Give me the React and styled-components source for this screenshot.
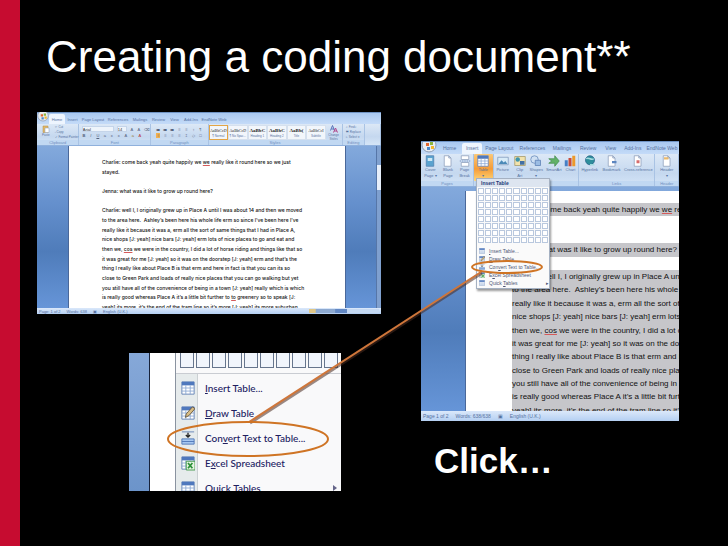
import React from "react";
import styled, { createGlobalStyle } from "styled-components";

const GlobalStyle = createGlobalStyle`
  * { box-sizing: border-box; }
  body { margin: 0; background: #000; font-family: "Liberation Sans", Arial, sans-serif; }
  button, select { font: inherit; color: inherit; border: 0; padding: 0; margin: 0; background: none; appearance: none; }
`;

const Slide = styled.main`
  min-height: 100vh;
  padding: 31px 49px 0 17px;
  border-left: 20px solid #c60c30;
  background: #000;
  color: #fff;
`;
const Title = styled.h1`
  margin: 0 0 29px 9px;
  font-size: 44px;
  line-height: 52px;
  font-weight: 400;
  white-space: nowrap;
`;
const Figures = styled.div`
  position: relative;
  display: grid;
  grid-template-columns: 344fr 258fr;
  column-gap: 40px;
`;
const Column = styled.div`
  min-width: 0;
  padding-top: ${(p) => p.$top || 0}px;
`;
const Caption = styled.p`
  margin: 20px 0 0 13px;
  font-size: 35px;
  line-height: 40px;
  font-weight: 700;
`;
const Annotation = styled.svg`
  position: absolute;
  inset: 0;
  width: 100%;
  height: 379px;
  pointer-events: none;
`;

/* Word window */
const Window = styled.section`
  overflow: hidden;
  background: #bcd3f0;
  color: #55719f;
  font-size: 4px;
  line-height: 5px;
  white-space: nowrap;
`;
const Tabs = styled.nav`
  display: flex;
  align-items: flex-end;
  height: ${(p) => p.$h}px;
  background: linear-gradient(#a9c8f0, #c4dbf8);
  border-top: 1px solid #6f93c4;
  font-size: ${(p) => p.$font}px;
`;
const Orb = styled.svg`
  flex: none;
  width: ${(p) => p.$w}px;
  height: 12px;
`;
const Tab = styled.button`
  flex: ${(p) => p.$w} 0 0;
  min-width: 0;
  height: 88%;
  text-align: center;
  border-radius: 2px 2px 0 0;
  background: ${(p) => (p.$on ? "#eef5fe" : "transparent")};
`;
const TabSpace = styled.span`
  flex: 153 0 0;
`;
const Ribbon = styled.div`
  display: flex;
  height: ${(p) => p.$h}px;
  background: linear-gradient(#dce8f6, #c5d8ef 60%, #d5e5f7);
  border-bottom: 1px solid #8fb0dc;
`;
const Group = styled.div`
  display: flex;
  flex-direction: column;
  flex: ${(p) => p.$w} 0 0;
  min-width: 0;
  border-right: 1px solid #a9c3e4;
`;
const GroupTools = styled.div`
  display: flex;
  flex: 1;
  min-height: 0;
  align-items: center;
  justify-content: space-around;
`;
const GroupLabel = styled.div`
  min-height: 5px;
  text-align: center;
  background: #c1d8f2;
  color: #6f8fc0;
`;
const Stack = styled.div`
  display: flex;
  flex-direction: column;
  gap: ${(p) => p.$gap || 0}px;
  align-items: flex-start;
`;
const ToolRow = styled.div`
  display: flex;
  gap: 3px;
  align-items: center;
`;
const Tool = styled.button`
  width: 4px;
  height: 5px;
  line-height: 5px;
  color: ${(p) => p.$c || "#56647e"};
  background: ${(p) => p.$bg || "transparent"};
`;
const TextTool = styled.button`
  display: block;
  height: 5px;
  line-height: 5px;
  font-size: 3px;
`;
const FontSelect = styled.select`
  width: ${(p) => p.$w}px;
  height: 6px;
  line-height: 5px;
  background: #eef4fb;
  border: 1px solid #c5d5ea;
  color: #333;
`;
const Gallery = styled.div`
  display: flex;
  flex: 118 0 0;
  height: 15px;
  background: #f2f6fb;
`;
const StyleCard = styled.button`
  flex: 1 1 0;
  min-width: 0;
  overflow: hidden;
  border: 1px solid ${(p) => (p.$on ? "#e3a545" : "#d5e0ee")};
  font-size: 3px;
  line-height: 4px;
  text-align: center;
  b {
    display: block;
    color: #222;
    font: ${(p) => (p.$big ? "700 5px/7px" : "400 4px/7px")} "Liberation Serif", serif;
  }
`;
const BigTool = styled.button`
  flex: ${(p) => p.$w} 0 0;
  min-width: 0;
  height: 100%;
  display: flex;
  flex-direction: column;
  align-items: center;
  padding-top: 1px;
  border-radius: 1px;
  line-height: ${(p) => (p.$small ? 4 : 6)}px;
  font-size: ${(p) => (p.$small ? 3 : 4)}px;
  background: ${(p) => (p.$on ? "linear-gradient(#fbc877, #f59c38 55%, #fdd67a)" : "transparent")};
  svg {
    flex: none;
    width: ${(p) => (p.$small ? 8 : 12)}px;
    height: ${(p) => (p.$small ? 8 : 12)}px;
  }
`;

const Workspace = styled.div`
  display: flex;
  height: ${(p) => p.$h}px;
  overflow: hidden;
  padding-left: ${(p) => p.$left}px;
  padding-top: ${(p) => p.$top}px;
  background: linear-gradient(#83a9dc, #6590cd 35%, #4f7cba 65%, #6695d8);
`;
const Paper = styled.article`
  flex: 1;
  min-width: 0;
  overflow: hidden;
  padding: ${(p) => p.$pad};
  background: #fff;
  border-left: 1px solid #4a689a;
  border-right: ${(p) => (p.$edge ? "1px solid #4a689a" : "0")};
`;
const Lines = styled.div`
  display: grid;
  grid-template-rows: repeat(16, 1fr);
  align-items: stretch;
  height: ${(p) => p.$h}px;
  font: ${(p) => p.$font};
  color: #111;
`;
const Line = styled.div`
  display: flex;
  align-items: center;
  white-space: pre;
  background: ${(p) => (p.$sel ? "#c6c6ca" : "transparent")};
  u { text-decoration: underline; text-decoration-color: #d45a5a; }
`;
const Scroll = styled.div`
  width: 5px;
  margin-left: 30px;
  padding-top: 19px;
  background: #7fa0cf;
  border-left: 1px solid #5676a8;
`;
const Thumb = styled.div`
  height: 25px;
  background: #e6eefa;
`;
const Status = styled.footer`
  display: flex;
  align-items: center;
  gap: ${(p) => p.$gap}px;
  height: ${(p) => p.$h}px;
  padding: 0 2px;
  background: linear-gradient(#dbe8fa, #b4cff2);
  font-size: ${(p) => p.$font}px;
`;
const ZoomBar = styled.span`
  width: 70px;
  height: 4px;
  margin-left: auto;
  background: linear-gradient(90deg, #e0c787 9%, #8da9d0 10% 37%, #6288c4 38% 54%, #c5d9f3 55%);
`;

/* Insert-table menu inside the second window */
const WindowWrap = styled.div`
  position: relative;
`;
const Menu = styled.div`
  position: absolute;
  left: 55px;
  top: 37px;
  width: 74px;
  padding-bottom: 1px;
  background: #fafafa;
  border: 1px solid #a5b1c2;
  box-shadow: 1px 2px 2px rgba(0, 0, 0, 0.4);
  font-size: 5px;
  line-height: 8px;
  color: #4d5674;
`;
const MenuHead = styled.div`
  padding-left: 4px;
  background: #dde5f0;
  color: #243b78;
  font-weight: 700;
`;
const Cells = styled.div`
  display: grid;
  grid-template-columns: repeat(10, 1fr);
  grid-auto-rows: 6px;
  gap: 1px;
  padding: 1px 1px 4px;
`;
const Cell = styled.i`
  border: 1px solid #b9c8de;
  background: #fff;
`;
const MenuItem = styled.button`
  display: flex;
  align-items: center;
  width: 100%;
  height: 8px;
  white-space: nowrap;
  svg { width: 6px; height: 6px; margin: 0 4px 0 2px; }
  span { flex: 1; text-align: left; }
`;

/* Enlarged menu detail */
const Detail = styled.section`
  display: flex;
  height: 138px;
  width: 212px;
  margin: 39px 0 0 92px;
  overflow: hidden;
  background: #fff;
`;
const DetailSide = styled.div`
  width: 21px;
  background: linear-gradient(#86a8d8, #6c94ca);
  border-right: 1px solid #17223a;
`;
const DetailMenu = styled.div`
  flex: 1;
  min-width: 0;
  margin-left: 25px;
  border-left: 1px solid #8a93a0;
  background: #f9f9fa;
`;
const DetailCells = styled.div`
  display: flex;
  gap: 2px;
  height: 21px;
  padding: 0 0 5px 4px;
  overflow: hidden;
  border-bottom: 1px solid #c9ccd2;
`;
const DetailCell = styled.i`
  flex: none;
  width: 14px;
  border: 1px solid #66758d;
  border-top: 0;
  background: #f1f5fc;
`;
const DetailItems = styled.div`
  padding-top: 1px;
  background: linear-gradient(90deg, #e6ebec 21px, #cbd0d3 21px 22px, transparent 22px);
`;
const DetailItem = styled.button`
  display: flex;
  align-items: center;
  width: 100%;
  height: 25px;
  padding-left: 5px;
  color: #20205f;
  font-family: Lato, "Noto Sans", sans-serif;
  font-size: 10px;
  font-weight: 500;
  white-space: nowrap;
  svg { flex: none; width: 14px; height: 16px; margin-right: 10px; }
  span { flex: 1; text-align: left; }
  u { text-underline-offset: 1px; }
`;
const More = styled.em`
  margin-right: 4px;
  border-left: 4px solid #66668a;
  border-top: 3px solid transparent;
  border-bottom: 3px solid transparent;
`;

const transcript = [
  ["Charlie: come back yeah quite happily we ", "we", " really like it round here so we just"],
  ["stayed."],
  [""],
  ["Jenna: what was it like to grow up round here?"],
  [""],
  ["Charlie: well I, I originally grew up in Place A until I was about 14 and then we moved"],
  ["to the area here.  Ashley’s been here his whole life erm so since I’ve been here I’ve"],
  ["really like it because it was a, erm all the sort of same things that I had in Place A,"],
  ["nice shops [J: yeah] nice bars [J: yeah] erm lots of nice places to go and eat and"],
  ["then we, ", "cos", " we were in the country, I did a lot of horse riding and things like that so"],
  ["it was great for me [J: yeah] so it was on the doorstep [J: yeah] erm and that’s the"],
  ["thing I really like about Place B is that erm and here in fact is that you can its so"],
  ["close to Green Park and loads of really nice places that you can go walking but yet"],
  ["you still have all of the convenience of being in a town [J: yeah] really which is which"],
  ["is really good whereas Place A it’s a little bit further to ", "to", " greenery so to speak [J:"],
  ["yeah] its more, it’s the end of the tram line so it’s more [J: yeah] its more suburban"],
];

function Transcript({ selected, height, font }) {
  return (
    <Lines $h={height} $font={font}>
      {transcript.map(([before, marked, after], i) => (
        <Line key={i} $sel={selected && (i === 0 || i === 3 || i > 4)}>
          <span>{before}{marked && <u>{marked}</u>}{after}</span>
        </Line>
      ))}
    </Lines>
  );
}

function OfficeOrb({ width }) {
  return (
    <Orb $w={width} viewBox="0 0 16 12" aria-hidden="true">
      <circle cx="8" cy="3" r="7" fill="#e9edf3" stroke="#8b9bb2" />
      <path d="M5 1h3v3H5z" fill="#e0662e" />
      <path d="M9 0h3v3H9z" fill="#8cb63c" />
      <path d="M6 5h3v3H6z" fill="#4b87c9" />
      <path d="M10 4h3v3h-3z" fill="#f2b72f" />
    </Orb>
  );
}

const PageShape = <path d="M3 1h6l3 3v11H3z M9 1v3h3" fill="#fff" stroke="#8b9cb8" />;
const TableShape = (
  <>
    <path d="M1 1h14v14H1z" fill="#fff" stroke="#5d7db4" />
    <path d="M1 1h14v4H1z" fill="#4f78bd" />
    <path d="M1 8h14M1 11.500h14M5.500 5v10M10.500 5v10" stroke="#8ba8d4" />
  </>
);
const drawings = {
  cover: <><path d="M3 1h10v14H3z" fill="#5aa3cf" stroke="#527fae" /><path d="M5 4h6v4H5z" fill="#cfe8f4" /></>,
  blank: PageShape,
  pageBreak: <><path d="M3 1h10v5H3zM3 10h10v5H3z" fill="#fff" stroke="#8b9cb8" /><path d="M1 8h14" stroke="#5d7db4" strokeDasharray="2 1" /></>,
  table: TableShape,
  picture: <><path d="M1 3h14v10H1z" fill="#d8ebf8" stroke="#7c96b8" /><path d="M2 12l4-5 3 3 2-2 3 4z" fill="#4c8ab8" /></>,
  clip: <><path d="M1 2h14v12H1z" fill="#f1e2ac" stroke="#a39765" /><circle cx="5" cy="6" r="3" fill="#3f95ab" /><path d="M8 8h6v5H8z" fill="#416fa4" /></>,
  shapes: <><circle cx="6" cy="6" r="5" fill="#cfe0f3" stroke="#6488ba" /><path d="M7 7h7v7H7z" fill="#9bbce3" stroke="#5a7eb3" /></>,
  smart: <path d="M1 5h8V1l6 7-6 7v-4H1l4-3z" fill="#61b168" stroke="#478d52" />,
  chart: <><path d="M1 7h4v8H1z" fill="#477fc5" /><path d="M6 4h4v11H6z" fill="#c84b3a" /><path d="M11 1h4v14h-4z" fill="#ec9a2c" /></>,
  link: <><circle cx="8" cy="7" r="6" fill="#2e8e9c" stroke="#28618a" /><path d="M3 5c4-3 6 3 10 0M8 13h6" stroke="#a5dce0" strokeWidth="2" fill="none" /></>,
  bookmark: <>{PageShape}<path d="M8 8h6v3H8z" fill="#5c86c0" /></>,
  cross: <>{PageShape}<path d="M6 7h4v4H6z" fill="#d66b6b" /></>,
  header: <>{PageShape}<path d="M4 3h6v3H4z" fill="#e9b96b" /></>,
  draw: <>{TableShape}<path d="M5 13l1-4 7-8 3 2-7 8z" fill="#d9bd85" stroke="#66563d" /></>,
  convert: <><path d="M1 1h14" stroke="#5d7db4" /><path d="M8 2v5M5.500 4.500L8 7l2.500-2.500" stroke="#222" strokeWidth="1.500" fill="none" /><path d="M1 9h14v6H1z" fill="#a7c8f1" stroke="#4c73b5" /><path d="M1 12h14" stroke="#4c73b5" /></>,
  excel: <>{TableShape}<path d="M6 6h10v10H6z" fill="#e6f4e2" stroke="#3a9544" /><path d="M8 8l5 6M13 8l-5 6" stroke="#2c9138" strokeWidth="2" /></>,
  paste: <><path d="M2 2h10v13H2z" fill="#e3b866" stroke="#b08c48" /><path d="M6 6h8v9H6z" fill="#fff" stroke="#8b9cb8" /></>,
  styles: <><path d="M1 11L5 1l4 10M3 8h5" stroke="#5872b8" strokeWidth="2" fill="none" /><path d="M7 15l4-9 4 9M8 12h6" stroke="#b04a8d" strokeWidth="2" fill="none" /></>,
};
const Icon = ({ name }) => <svg viewBox="0 0 16 16" aria-hidden="true">{drawings[name]}</svg>;

const menuItems = [
  { icon: "table", key: "I", rest: "nsert Table..." },
  { icon: "draw", key: "D", rest: "raw Table" },
  { icon: "convert", pre: "Con", key: "v", rest: "ert Text to Table..." },
  { icon: "excel", pre: "E", key: "x", rest: "cel Spreadsheet" },
  { icon: "table", pre: "Quick ", key: "T", rest: "ables", more: true },
];
const ItemText = ({ item }) => <span>{item.pre}<u>{item.key}</u>{item.rest}</span>;

const homeTabs = [["Home", 16], ["Insert", 15], ["Page Layout", 26], ["References", 24], ["Mailings", 20], ["Review", 17], ["View", 15], ["Add-Ins", 18], ["EndNote Web", 28]];
const insertTabs = [["Home", 25], ["Insert", 20], ["Page Layout", 34], ["References", 32], ["Mailings", 27], ["Review", 25], ["View", 20], ["Add-Ins", 24], ["EndNote Web", 34]];
const insertGroups = [
  ["Pages", 53, [["cover", "Cover", "Page ▾", 18], ["blank", "Blank", "Page", 16], ["pageBreak", "Page", "Break", 16]]],
  ["", 19, [["table", "Table", "▾", 18]]],
  ["", 86, [["picture", "Picture", "", 18], ["clip", "Clip", "Art", 16], ["shapes", "Shapes", "▾", 17], ["smart", "SmartArt", "", 18], ["chart", "Chart", "", 15]]],
  ["Links", 77, [["link", "Hyperlink", "", 21], ["bookmark", "Bookmark", "", 21], ["cross", "Cross-reference", "", 31]]],
  ["Header", 23, [["header", "Header", "▾", 22]]],
];
const styleCards = [["AaBbCcD", "¶ Normal"], ["AaBbCcD", "¶ No Spac..."], ["AaBbC", "Heading 1", true], ["AaBbC", "Heading 2", true], ["AaBb(", "Title", true], ["AaBbCcI", "Subtitle"]];

function HomeWindow() {
  return (
    <Window aria-label="Word, Home tab">
      <Tabs $h={12} $font={4}>
        <OfficeOrb width={12} />
        {homeTabs.map(([name, w], i) => <Tab key={name} $w={w} $on={i === 0}>{name}</Tab>)}
        <TabSpace />
      </Tabs>
      <Ribbon $h={22}>
        <Group $w={42}>
          <GroupTools>
            <BigTool $w={14} $small><Icon name="paste" />Paste</BigTool>
            <Stack>
              <TextTool>✂ Cut</TextTool><TextTool>▫ Copy</TextTool><TextTool>✓ Format Painter</TextTool>
            </Stack>
          </GroupTools>
          <GroupLabel>Clipboard</GroupLabel>
        </Group>
        <Group $w={72}>
          <GroupTools>
            <Stack $gap={1}>
              <ToolRow>
                <FontSelect $w={32} aria-label="Font"><option>Arial</option></FontSelect>
                <FontSelect $w={10} aria-label="Size"><option>14</option></FontSelect>
                <Tool>A</Tool><Tool>A</Tool><Tool>⌫</Tool>
              </ToolRow>
              <ToolRow>
                <Tool><b>B</b></Tool><Tool><i>I</i></Tool><Tool><u>U</u></Tool><Tool>a</Tool><Tool>x</Tool><Tool>x</Tool><Tool>A</Tool><Tool $c="#9a7a2a">a</Tool><Tool $c="#b83232">A</Tool>
              </ToolRow>
            </Stack>
          </GroupTools>
          <GroupLabel>Font</GroupLabel>
        </Group>
        <Group $w={57}>
          <GroupTools>
            <Stack $gap={1}>
              <ToolRow><Tool>≔</Tool><Tool>≔</Tool><Tool>≔</Tool><Tool>≡</Tool><Tool>≡</Tool><Tool>↕</Tool><Tool>¶</Tool></ToolRow>
              <ToolRow><Tool $bg="#f3b14d">≡</Tool><Tool>≡</Tool><Tool>≡</Tool><Tool>≡</Tool><Tool>‡</Tool><Tool>◇</Tool><Tool>□</Tool></ToolRow>
            </Stack>
          </GroupTools>
          <GroupLabel>Paragraph</GroupLabel>
        </Group>
        <Group $w={135}>
          <GroupTools>
            <Gallery>
              {styleCards.map(([sample, name, big], i) => (
                <StyleCard key={name} $on={i === 0} $big={big}><b>{sample}</b>{name}</StyleCard>
              ))}
            </Gallery>
            <BigTool $w={16} $small><Icon name="styles" /><span>Change</span><span>Styles</span></BigTool>
          </GroupTools>
          <GroupLabel>Styles</GroupLabel>
        </Group>
        <Group $w={22}>
          <GroupTools>
            <Stack><TextTool>⌕ Find ▾</TextTool><TextTool>⇄ Replace</TextTool><TextTool>▹ Select ▾</TextTool></Stack>
          </GroupTools>
          <GroupLabel>Editing</GroupLabel>
        </Group>
        <Group $w={15} />
      </Ribbon>
      <Workspace $h={162} $left={31} $top={0}>
        <Paper $pad="11px 0 0 33px" $edge>
          <Transcript height={155} font={'500 5px Inter, "Liberation Sans", sans-serif'} />
        </Paper>
        <Scroll><Thumb /></Scroll>
      </Workspace>
      <Status $h={6} $gap={6} $font={4}><span>Page: 1 of 2</span><span>Words: 638</span><span>▣</span><span>English (U.K.)</span><ZoomBar /></Status>
    </Window>
  );
}

function InsertWindow() {
  return (
    <WindowWrap>
      <Window aria-label="Word, Insert tab">
        <Tabs $h={13} $font={5}>
          <OfficeOrb width={16} />
          {insertTabs.map(([name, w], i) => <Tab key={name} $w={w} $on={i === 1}>{name}</Tab>)}
        </Tabs>
        <Ribbon $h={33}>
          {insertGroups.map(([name, w, tools], i) => (
            <Group key={i} $w={w}>
              <GroupTools>
                {tools.map(([icon, a, b, tw]) => (
                  <BigTool key={icon} $w={tw} $on={icon === "table"}><Icon name={icon} /><span>{a}</span><span>{b}</span></BigTool>
                ))}
              </GroupTools>
              <GroupLabel>{name}</GroupLabel>
            </Group>
          ))}
        </Ribbon>
        <Workspace $h={224} $left={44} $top={4}>
          <Paper $pad="12px 0 0 46px">
            <Transcript height={214} font={'8px "Liberation Sans", Arial, sans-serif'} selected />
          </Paper>
        </Workspace>
        <Status $h={10} $gap={7} $font={5}><span>Page 1 of 2</span><span>Words: 638/638</span><span>▣</span><span>English (U.K.)</span></Status>
      </Window>
      <Menu>
        <MenuHead>Insert Table</MenuHead>
        <Cells>{Array.from({ length: 80 }, (_, i) => <Cell key={i} />)}</Cells>
        {menuItems.map((item) => (
          <MenuItem key={item.icon + item.rest}><Icon name={item.icon} /><ItemText item={item} />{item.more && "▸"}</MenuItem>
        ))}
      </Menu>
    </WindowWrap>
  );
}

export default function App() {
  return (
    <Slide>
      <GlobalStyle />
      <Title>Creating a coding document**</Title>
      <Figures>
        <Column>
          <HomeWindow />
          <Detail aria-label="Table menu, enlarged">
            <DetailSide />
            <DetailMenu>
              <DetailCells>{Array.from({ length: 10 }, (_, i) => <DetailCell key={i} />)}</DetailCells>
              <DetailItems>
                {menuItems.map((item) => (
                  <DetailItem key={item.icon + item.rest}><Icon name={item.icon} /><ItemText item={item} />{item.more && <More />}</DetailItem>
                ))}
              </DetailItems>
            </DetailMenu>
          </Detail>
        </Column>
        <Column $top={29}>
          <InsertWindow />
          <Caption>Click…</Caption>
        </Column>
        <Annotation viewBox="0 0 642 379" preserveAspectRatio="none" aria-hidden="true">
          <g fill="none" stroke="#cf7424" strokeWidth="2">
            <path d="M213 311L445 161" stroke="#4a2c20" strokeOpacity="0.55" strokeWidth="3" />
            <path d="M212 310L444 160" stroke="#cf763a" />
            <ellipse cx="211" cy="327" rx="80" ry="17" />
            <ellipse cx="470" cy="155" rx="35" ry="6" />
          </g>
        </Annotation>
      </Figures>
    </Slide>
  );
}
